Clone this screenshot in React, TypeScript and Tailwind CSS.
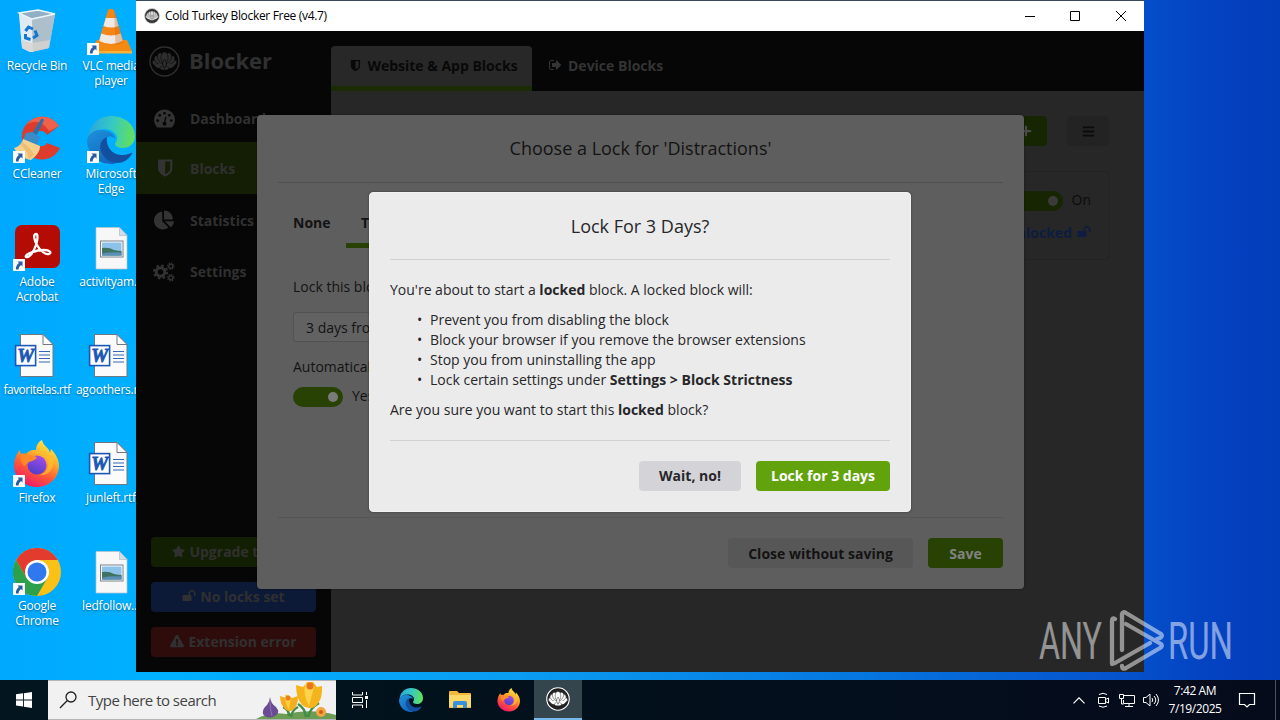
import type { ReactNode } from 'react';
import { FaBars, FaChartPie, FaExclamationTriangle, FaPlus, FaStar } from 'react-icons/fa';

/* ---------- Glyphs ---------- */

function ShieldIcon({ className }: { className: string }) {
  return (
    <svg viewBox="0 0 1664 1792" className={className} fill="currentColor">
      <path d="M1344 960V320H896v1137q119-63 213-137 235-184 235-360zm192-768v768q0 86-33.500 170.500t-83 150-118 127.500-126.500 103-121 77.500-89.500 49.500-42.500 20q-12 6-26 6t-26-6q-16-7-42.500-20t-89.500-49.500-121-77.500-126.500-103-118-127.500-83-150T256 960V192q0-26 19-45t45-19h1152q26 0 45 19t19 45z" />
    </svg>
  );
}

function UnlockIcon({ className }: { className: string }) {
  return (
    <svg viewBox="0 0 1792 1792" className={className} fill="currentColor">
      <path d="M1728 576v256q0 26-19 45t-45 19h-64q-26 0-45-19t-19-45V576q0-106-75-181t-181-75-181 75-75 181v192h96q40 0 68 28t28 68v576q0 40-28 68t-68 28H160q-40 0-68-28t-28-68V864q0-40 28-68t68-28h672V576q0-185 131.500-316.500T1280 128t316.500 131.500T1728 576z" />
    </svg>
  );
}

function SignOutIcon({ className }: { className: string }) {
  return (
    <svg viewBox="0 128 1664 1536" className={className} fill="currentColor">
      <path d="M640 1440q0 4 1 20t.5 26.500-3 23.500-10 19.500-20.500 6.500h-320q-119 0-203.500-84.500T0 1248V544q0-119 84.500-203.500T288 256h320q13 0 22.500 9.500T640 288q0 4 1 20t.5 26.500-3 23.500-10 19.500T608 384H288q-66 0-113 47t-47 113v704q0 66 47 113t113 47h312l11.500 1 11.500 3 8 5.500 7 9 2 13.500z" />
      <path d="M1568 896q0 26-19 45l-544 544q-19 19-45 19t-45-19-19-45v-288H448q-26 0-45-19t-19-45V704q0-26 19-45t45-19h448V352q0-26 19-45t45-19 45 19l544 544q19 19 19 45z" />
    </svg>
  );
}

function DialIcon({ className }: { className: string }) {
  return (
    <svg viewBox="0 0 20 18" className={className}>
      <path d="M3 17.500a10 10 0 1 1 14 0z" fill="currentColor" />
      <g fill="#060606">
        <circle cx="3.500" cy="11" r="1.300" />
        <circle cx="5.500" cy="6" r="1.300" />
        <circle cx="10" cy="4" r="1.300" />
        <circle cx="14.500" cy="6" r="1.300" />
        <circle cx="16.500" cy="11" r="1.300" />
      </g>
      <path d="M10 13.500l1.300-6" stroke="#060606" strokeWidth="1.300" />
      <circle cx="10" cy="14" r="1.900" fill="#060606" />
    </svg>
  );
}

function GearsIcon({ className }: { className: string }) {
  return (
    <svg viewBox="0 0 22 20" className={className} fill="none" stroke="currentColor">
      <circle cx="7.500" cy="10" r="4.300" strokeWidth="3" />
      <circle cx="7.500" cy="10" r="6.500" strokeWidth="2" strokeDasharray="2.550 2.550" />
      <circle cx="17.800" cy="4.200" r="2" strokeWidth="1.400" />
      <circle cx="17.800" cy="4.200" r="3.200" strokeWidth="1.300" strokeDasharray="1.250 1.260" />
      <circle cx="17.800" cy="15.800" r="2" strokeWidth="1.400" />
      <circle cx="17.800" cy="15.800" r="3.200" strokeWidth="1.300" strokeDasharray="1.250 1.260" />
    </svg>
  );
}

/* ---------- Logos ---------- */

function TurkeyLogo({ className, dark, light }: { className: string; dark: string; light: string }) {
  const feathers = [-78, 78, -52, 52, -26, 26, 0];
  return (
    <svg viewBox="0 0 32 32" className={className}>
      <circle cx="16" cy="16" r="15" fill={dark} stroke={light} strokeWidth="1.500" />
      {feathers.map((a) => (
        <ellipse
          key={a}
          cx="16"
          cy="12"
          rx="3.700"
          ry="6"
          fill={light}
          stroke={dark}
          strokeWidth="0.600"
          transform={`rotate(${a} 16 19)`}
        />
      ))}
      <path d="M5.500 18.500q3 1 5 0h11q2 1 5 0-1 4.500-6 4.500l-1.500 1.500h-6L11.500 23q-5 0-6-4.500z" fill={light} />
      <path d="M16 13.500c-1.600 2-2.200 4-1.600 6.500l1.600 3 1.600-3c.6-2.500 0-4.500-1.600-6.500z" fill={light} stroke={dark} strokeWidth="0.700" />
      <path d="M11 22.500l3-2M21 22.500l-3-2" stroke={dark} strokeWidth="0.600" />
    </svg>
  );
}

function EdgeLogo({ className, id }: { className: string; id: string }) {
  return (
    <svg viewBox="0 0 48 48" className={className}>
      <defs>
        <linearGradient id={`${id}a`} x1="0" y1="0.3" x2="1" y2="0.4">
          <stop offset="0" stopColor="#2aa5df" />
          <stop offset="0.5" stopColor="#35c9c4" />
          <stop offset="1" stopColor="#63e05a" />
        </linearGradient>
        <linearGradient id={`${id}b`} x1="0" y1="0" x2="0.5" y2="1">
          <stop offset="0" stopColor="#1e93dc" />
          <stop offset="1" stopColor="#1268bd" />
        </linearGradient>
      </defs>
      <path d="M1 22C2 9 12 0 24 0c14 0 24 9 24 20 0 8-6 12-12 12-5 0-8-2-8-4s2-2 2-6c0-5-6-9-13-9C9 13 3 17 1 22z" fill={`url(#${id}a)`} />
      <path d="M0 24c2-7 7-10 14-10 8 0 14 4 14 9-1-2-4-3-7-2-6 2-8 8-5 14 3 7 9 10 13 12-2 1-3 1-5 1C11 48 0 37 0 24z" fill={`url(#${id}b)`} />
      <path d="M20 21c-7 3-9 11-4 18 5 8 15 10 22 6 3-2 5-4 7-7 .5-1-.3-1.500-1-1-4 2-10 3-15 1-7-3-10-10-9-17z" fill="#134f9e" />
    </svg>
  );
}

function FirefoxLogo({ className, id }: { className: string; id: string }) {
  return (
    <svg viewBox="0 0 48 48" className={className}>
      <defs>
        <linearGradient id={`${id}a`} x1="0.8" y1="0" x2="0.3" y2="1">
          <stop offset="0" stopColor="#fff14a" />
          <stop offset="0.35" stopColor="#ffb02b" />
          <stop offset="0.65" stopColor="#ff5a36" />
          <stop offset="1" stopColor="#f0146c" />
        </linearGradient>
        <linearGradient id={`${id}b`} x1="0.7" y1="0" x2="0.3" y2="1">
          <stop offset="0" stopColor="#a54bea" />
          <stop offset="1" stopColor="#4a3fc8" />
        </linearGradient>
      </defs>
      <path
        d="M7 10c0 2 .5 3.500 1.500 5 1.500-1 3-1.500 5-1.500C17 9 21 10 23 10c0-4 2-8 6-10 1 5 5 7 7 10l1 3 1-4c5 5 8 11 8 17 0 12-10 21-22 21S1 38 1 26c0-6 2-12 6-16z"
        fill={`url(#${id}a)`}
      />
      <circle cx="24" cy="25" r="9.500" fill={`url(#${id}b)`} />
      <path d="M8 14c3-1 6 0 8 2 3-1 7 0 8 2-2 2-5 3-8 4-2 1-3 3-5 4-3-3-4-8-3-12z" fill="#ff8a27" />
      <path d="M25 14c5-1 10 3 10 10 0 6-4 10-9 11 8 1 14-4 14-12 0-7-7-11-15-9z" fill="#ffbd30" opacity="0.75" />
    </svg>
  );
}

function RecycleBin() {
  return (
    <svg viewBox="0 0 48 48" className="size-12">
      <path d="M6 5l19-3 17 4-6 34-19 4-8-4z" fill="#c7d9e6" opacity="0.95" />
      <path d="M6 5l13 6 1 33-3 0-8-4z" fill="#dfeaf2" />
      <path d="M19 11l23-5-6 34-16 4z" fill="#aebfcc" />
      <path d="M9 32l10 3 18-3-1.500 8-18.500 4-8-4z" fill="#d9d4d1" opacity="0.8" />
      <path d="M6 5l19-3 17 4-23 5z" fill="#92b0c4" stroke="#eef6fb" strokeWidth="1.300" />
      <g fill="none" stroke="#1477cf" strokeWidth="3">
        <path d="M12.500 23l3-4 4.500 2" />
        <path d="M22 22.500l2 5-4 2.500" />
        <path d="M17.500 31.500l-5-1.500 0-4" />
      </g>
    </svg>
  );
}

function VlcLogo() {
  return (
    <svg viewBox="0 0 48 48" className="size-12">
      <path d="M10 32h30l5 11q.5 2-1 2H4q-1.500 0-1-2z" fill="#f58a12" />
      <path d="M3 43h42v2.500H3z" fill="#ffb037" />
      <path d="M21 2q3-2.500 6 0l9.500 32q-12 8-25 0z" fill="#f58616" />
      <path d="M18.800 10h10.400l2.300 8q-7.500 3-15 0zM14.300 25.500q9.500 4 19.300 0l2.200 7.500q-11.500 6-23.500 0z" fill="#eee9e4" />
      <path d="M27 2l9.500 32q-4 3-8 3z" fill="#c95f08" opacity="0.3" />
    </svg>
  );
}

function CCleanerLogo() {
  return (
    <svg viewBox="0 0 48 48" className="size-12">
      <path d="M46 10C41 3 34 0 27 1 16 2 8 11 9 23c1 14 13 23 24 20 6-1 11-5 14-11l-13-5c-3 5-10 4-12-1-2-6 1-11 6-11 3 0 5 2 6 4z" fill="#dd3c2c" />
      <path d="M46 10C41 3 34 0 27 1c-6 .5-11 4-14 8 8-5 16-5 23 6z" fill="#f0614b" />
      <path d="M31 4l-9 19-5-2L28 3q2-1 3 1z" fill="#2f6ea8" />
      <path d="M13 17l6-1 8 5-3 9-14-6z" fill="#3a8cc9" />
      <path d="M10 23l17 7c0 6-4 10-9 14-7-1-14-6-17-12 4-1 8-4 9-9z" fill="#f6d08d" />
      <path d="M7 28c5 5 8 9 9 15l5-4c-2-5-6-9-12-13z" fill="#e9b565" opacity="0.7" />
    </svg>
  );
}

function AcrobatLogo() {
  return (
    <svg viewBox="0 0 48 48" className="size-12">
      <rect x="2" y="1" width="45" height="43" rx="7" fill="#b50b05" />
      <path
        d="M13 33c4 1 8-6 10-12 2-6 2-11 0-11-3 0-2 6 1 11 3 6 9 10 12 9 3-1 1-4-5-4-7 0-20 4-18 7z"
        fill="none"
        stroke="#fff"
        strokeWidth="2.300"
        strokeLinejoin="round"
      />
    </svg>
  );
}

function ChromeLogo() {
  return (
    <svg viewBox="0 0 48 48" className="size-12">
      <circle cx="24" cy="24" r="24" fill="#fbc116" />
      <path d="M24 12h20.800A24 24 0 0 0 3.200 12l10.400 18z" fill="#e33b2e" />
      <path d="M3.200 12l10.400 18L34.400 30 24 48A24 24 0 0 1 3.200 12z" fill="#2da04e" />
      <circle cx="24" cy="24" r="12" fill="#fff" />
      <circle cx="24" cy="24" r="9.500" fill="#2f78ee" />
    </svg>
  );
}

function ImageFile() {
  return (
    <svg viewBox="0 0 48 48" className="size-12">
      <path d="M9 3.500h23.500l7.500 8V45H9z" fill="#f7f7f7" stroke="#b9c3ca" strokeWidth="0.700" />
      <path d="M32.500 3.500v8H40z" fill="#d4dee6" stroke="#a8b4bc" strokeWidth="0.600" />
      <rect x="13.500" y="17" width="22.500" height="16" fill="#fff" stroke="#74828e" strokeWidth="1" />
      <rect x="15" y="18.500" width="19.500" height="13" fill="#8dc2ea" />
      <path d="M15 24q7-1 12 2 4 1 7.500 1v4.500H15z" fill="#3e7361" />
      <path d="M15 29.500q9-2 19.500-1v3H15z" fill="#5a8fb8" />
    </svg>
  );
}

function WordFile() {
  return (
    <svg viewBox="0 0 48 48" className="size-12">
      <path d="M7.500 2.500H30l10 10V44.500H7.500z" fill="#fbfbfb" stroke="#6f7780" strokeWidth="1" />
      <path d="M30 2.500V12.500h10z" fill="#fff" stroke="#6f7780" strokeWidth="1" />
      <path d="M26 19.500h11M26 23h11M26 26.500h11M26 30h11" stroke="#3568b8" strokeWidth="1.200" />
      <rect x="2.600" y="13.600" width="20" height="20" fill="#fff" stroke="#1b57b5" strokeWidth="1.600" />
      <text x="12.600" y="30" textAnchor="middle" fontFamily="Liberation Serif" fontWeight="700" fontStyle="italic" fontSize="19" fill="#1b57b5" stroke="#1b57b5" strokeWidth="0.8">
        W
      </text>
    </svg>
  );
}

function ShortcutArrow() {
  return (
    <svg viewBox="0 0 12 12" className="absolute bottom-px left-0 size-3">
      <rect width="12" height="12" fill="#f8fafc" />
      <path d="M4.500 2.500h5v5L8 6Q5.500 7.500 5.500 10.500H3Q2.500 6.500 6 4z" fill="#2a5ca0" />
    </svg>
  );
}

/* ---------- Desktop ---------- */

type Shortcut = { label: string[]; icon: ReactNode; arrow?: boolean };

const shortcuts: Shortcut[] = [
  { label: ['Recycle Bin'], icon: <RecycleBin /> },
  { label: ['VLC media', 'player'], icon: <VlcLogo />, arrow: true },
  { label: ['CCleaner'], icon: <CCleanerLogo />, arrow: true },
  { label: ['Microsoft', 'Edge'], icon: <EdgeLogo id="edgeDesk" className="size-12" />, arrow: true },
  { label: ['Adobe', 'Acrobat'], icon: <AcrobatLogo />, arrow: true },
  { label: ['activityam...'], icon: <ImageFile /> },
  { label: ['favoritelas.rtf'], icon: <WordFile /> },
  { label: ['agoothers.rtf'], icon: <WordFile /> },
  { label: ['Firefox'], icon: <FirefoxLogo id="ffDesk" className="size-12" />, arrow: true },
  { label: ['junleft.rtf'], icon: <WordFile /> },
  { label: ['Google', 'Chrome'], icon: <ChromeLogo />, arrow: true },
  { label: ['ledfollow...'], icon: <ImageFile /> },
];

function DesktopIcon({ label, icon, arrow }: Shortcut) {
  return (
    <div className="flex h-[108px] w-[74px] flex-col items-center pt-2">
      <div className="relative size-12">
        {icon}
        {arrow && <ShortcutArrow />}
      </div>
      <div className="mt-0.5 text-center text-[12px] leading-[15px] tracking-[-0.22px] whitespace-nowrap text-white [text-shadow:0_1px_2px_rgba(0,0,0,0.45)]">
        {label.map((l) => (
          <div key={l} className={l.length > 13 ? 'tracking-[-0.5px]' : undefined}>{l}</div>
        ))}
      </div>
    </div>
  );
}

/* ---------- Application window ---------- */

function TitleBar() {
  return (
    <div className="flex h-[30px] shrink-0 items-center bg-white pl-2 text-black">
      <TurkeyLogo className="size-4" dark="#333" light="#d9d9d9" />
      <span className="ml-[5px] text-[12px] tracking-[-0.32px] whitespace-nowrap">Cold Turkey Blocker Free (v4.7)</span>
      <div className="ml-auto flex">
        <span className="flex w-[46px] items-center justify-center">
          <svg viewBox="0 0 10 10" className="size-2.5"><path d="M0 5.500h10" stroke="#000" /></svg>
        </span>
        <span className="flex w-[44px] items-center justify-center">
          <svg viewBox="0 0 10 10" className="size-2.5"><path d="M.5.5h9v9h-9z" fill="none" stroke="#000" /></svg>
        </span>
        <span className="flex w-[47px] items-center justify-center">
          <svg viewBox="0 0 10 10" className="size-2.5"><path d="M0 0l10 10M10 0L0 10" stroke="#000" /></svg>
        </span>
      </div>
    </div>
  );
}

function Sidebar() {
  const items = [
    { name: 'Dashboard', icon: <DialIcon className="h-[19px] w-[21px]" />, row: 'h-[51px] pt-1' },
    { name: 'Blocks', icon: <ShieldIcon className="h-5 w-[19px]" />, row: 'h-[52px] bg-[#141e04]' },
    { name: 'Statistics', icon: <FaChartPie className="size-5" />, row: 'h-[52px]' },
    { name: 'Settings', icon: <GearsIcon className="h-5 w-[22px]" />, row: 'h-[51px]' },
  ];
  return (
    <div className="flex w-[195px] shrink-0 flex-col bg-[#060606] font-bold text-[#303030]">
      <div className="flex h-[60px] items-center pl-[13px]">
        <TurkeyLogo className="size-[31px]" dark="#060606" light="#2e2e2e" />
        <span className="ml-[9px] pb-[3px] text-[22px] leading-none">Blocker</span>
      </div>
      {items.map((it) => (
        <div key={it.name} className={`flex items-center ${it.row}`}>
          <span className="ml-[14px] flex w-7 justify-center text-[#333]">{it.icon}</span>
          <span className="ml-3 text-[14px]">{it.name}</span>
        </div>
      ))}
      <div className="mt-auto flex flex-col gap-[15px] p-[15px] text-[14px]">
        <div className="flex h-[30px] items-center justify-center gap-1 rounded-[4px] bg-[#131f03] pb-0.5">
          <FaStar className="size-[13px]" /> Upgrade to Pro
        </div>
        <div className="flex h-[30px] items-center justify-center gap-1 rounded-[4px] bg-[#0c1937] pb-0.5">
          <UnlockIcon className="size-[14px]" /> No locks set
        </div>
        <div className="flex h-[30px] items-center justify-center gap-1 rounded-[4px] bg-[#2f0c0c] pb-0.5">
          <FaExclamationTriangle className="size-[14px]" /> Extension error
        </div>
      </div>
    </div>
  );
}

function MainPane() {
  return (
    <div className="flex flex-1 flex-col">
      <div className="flex h-[60px] items-end bg-[#060606] text-[14px] font-bold">
        <div className="flex h-[45px] w-[201px] items-center justify-center gap-1.5 rounded-t-[4px] border-b-[5px] border-[#1b2b04] bg-[#282828] pb-0.5 pl-1 text-[#080808]">
          <ShieldIcon className="h-[13px] w-3" /> Website &amp; App Blocks
        </div>
        <div className="flex h-[45px] items-center gap-1.5 border-b-[5px] border-transparent pb-0.5 pl-[17px] text-[#343434]">
          <SignOutIcon className="h-3 w-[13px]" /> Device Blocks
        </div>
      </div>
      <div className="flex flex-1 flex-col items-end bg-[#272727] pt-[25px] pr-[35px] text-[14px] text-[#0b0b0b]">
        <div className="flex gap-5">
          <div className="flex h-[30px] w-[42px] items-center justify-center rounded-[4px] bg-[#162603] text-[#4a4a4a]">
            <FaPlus className="size-3" />
          </div>
          <div className="flex h-[30px] w-[42px] items-center justify-center rounded-[4px] bg-[#232324]">
            <FaBars className="size-[13px]" />
          </div>
        </div>
        <div className="mt-[25px] flex h-[89px] w-[743px] flex-col items-end rounded-[3px] border border-[#232323] pt-[18px] pr-[17px]">
          <div className="flex h-[22px] items-center">
            <div className="flex h-5 w-[50px] items-center justify-end rounded-full bg-[#172503] pr-[5px]">
              <span className="size-[10px] rounded-full bg-[#3b3b3b]" />
            </div>
            <span className="mb-0.5 ml-[9px] leading-5">On</span>
          </div>
          <div className="mt-[10px] flex h-5 items-center gap-[5px] font-bold text-[#0d1c40]">
            Unlocked <UnlockIcon className="size-[14px]" />
          </div>
        </div>
      </div>
    </div>
  );
}

function LockChooser() {
  return (
    <div className="absolute top-[114px] left-[121px] flex h-[474px] w-[767px] flex-col rounded-[4px] bg-[#5e5e5e] px-[21px] text-[14px] text-[#131313] shadow-[0_0_2px_rgba(0,0,0,0.5)]">
      <div className="flex h-[68px] items-center justify-center border-b border-[#505050] text-[18px]">Choose a Lock for 'Distractions'</div>
      <div className="flex flex-1 flex-col items-start px-[15px]">
        <div className="mt-[17px] flex h-[48px] font-bold">
          <div className="flex w-[53px] items-center pb-[3px]">None</div>
          <div className="flex w-[70px] items-center border-b-[5px] border-[#274203] pt-[2px] pl-[15px]">Timer</div>
        </div>
        <div className="mt-[29px] w-20 overflow-hidden leading-5 whitespace-nowrap">Lock this block</div>
        <div className="mt-[15px] flex h-[30px] w-[300px] items-center rounded-[3px] border border-[#525252] bg-[#626262] pl-3">3 days from now</div>
        <div className="mt-[15px] leading-5">Automatically</div>
        <div className="mt-[10px] flex items-center">
          <div className="flex h-5 w-[50px] items-center justify-end rounded-full bg-[#274203] pr-[5px]">
            <span className="size-[10px] rounded-full bg-[#7a7a7a]" />
          </div>
          <span className="-mt-0.5 ml-[9px] leading-5">Yes</span>
        </div>
      </div>
      <div className="flex h-[72px] items-start justify-end gap-[15px] border-t border-[#555] pt-5 font-bold">
        <div className="flex h-[30px] w-[185px] items-center justify-center rounded-[4px] bg-[#575758]">Close without saving</div>
        <div className="flex h-[30px] w-[75px] items-center justify-center rounded-[4px] bg-[#274203] text-[#828282]">Save</div>
      </div>
    </div>
  );
}

function ConfirmDialog() {
  const effects: ReactNode[] = [
    'Prevent you from disabling the block',
    'Block your browser if you remove the browser extensions',
    'Stop you from uninstalling the app',
    <>Lock certain settings under <b>Settings &gt; Block Strictness</b></>,
  ];
  return (
    <div className="absolute top-[191px] left-[233px] flex h-[320px] w-[542px] flex-col rounded-[4px] border border-[#f2f2f2] bg-[#ebebeb] px-5 text-[14px] leading-5 text-[#27272a] shadow-[0_0_2px_rgba(0,0,0,0.5)]">
      <div className="flex h-[67px] items-center justify-center border-b border-[#d0d0d0] text-[18px]">Lock For 3 Days?</div>
      <p className="mt-5">You're about to start a <b>locked</b> block. A locked block will:</p>
      <ul className="mt-2.5">
        {effects.map((e, i) => (
          <li key={i} className="flex">
            <span className="w-10 pl-[27px]">•</span>
            <span>{e}</span>
          </li>
        ))}
      </ul>
      <p className="mt-2.5">Are you sure you want to start this <b>locked</b> block?</p>
      <div className="mt-5 flex justify-end gap-[15px] border-t border-[#d0d0d0] pt-5 font-bold">
        <div className="flex h-[30px] w-[102px] items-center justify-center rounded-[4px] bg-[#d4d4d8]">Wait, no!</div>
        <div className="flex h-[30px] w-[134px] items-center justify-center rounded-[4px] bg-[#62a30d] text-white">Lock for 3 days</div>
      </div>
    </div>
  );
}

function Watermark() {
  return (
    <svg viewBox="0 0 210 70" className="absolute top-[605px] left-[1035px] h-[70px] w-[210px] opacity-50">
      <g fill="#fff" fontFamily="Roboto" fontSize="51">
        <text x="4" y="54" textLength="63" lengthAdjust="spacingAndGlyphs">ANY</text>
        <text x="133" y="54" textLength="65" lengthAdjust="spacingAndGlyphs">RUN</text>
      </g>
      <g fill="none" stroke="#fff" strokeWidth="4.300" strokeLinejoin="round" strokeLinecap="round">
        <path d="M80 14q-3-2-3 2v43l3-1 35-20" />
        <path d="M87 45V9q1-3 4-1l35 21q2 2-1 4l-3 1" />
        <path d="M91 19l35 20q2 2-1 4L91 63q-4 2-4-2" />
      </g>
    </svg>
  );
}

/* ---------- Taskbar ---------- */

function Flowers() {
  return (
    <svg viewBox="0 0 80 39" className="h-[39px] w-20">
      <path d="M0 39q14-8 30-5 25-6 50 1v4z" fill="#6d9c54" />
      <path d="M14 17q1 7 6 10 5 6-1 9-8 4-12-2-1-5 4-9 3-4 3-8z" fill="#6a4b94" />
      <path d="M14 20q0 9 2 16" stroke="#8f73b5" fill="none" />
      <path d="M33 36q0-7-6-9M35 37q1-7 7-10M50 37q-1-9-8-13M52 37q2-9 11-14" stroke="#3f8d46" strokeWidth="2.500" fill="none" />
      <path d="M24 16l6 2 2-3 4 3 6-2q0 10-5 14-5 3-9-2-4-5-4-12z" fill="#f4ae1d" />
      <path d="M29 15q4-1 6 3l-2 12q-4-6-4-15z" fill="#fccc42" />
      <path d="M40 5l7 2 4-5 6 0 4 5 5-1q1 13-6 20-7 5-14-1-6-7-6-20z" fill="#f6b41c" />
      <path d="M49 4q6-3 9 3l-5 19q-6-11-4-22z" fill="#ffd34a" />
      <circle cx="54" cy="6" r="3.500" fill="#e8741e" />
      <circle cx="32" cy="18" r="2.500" fill="#e8801e" />
      <circle cx="65" cy="32" r="5" fill="#f3a641" />
      <circle cx="65" cy="32" r="2" fill="#d2601a" />
    </svg>
  );
}

function Taskbar() {
  return (
    <div className="flex h-10 shrink-0 items-stretch bg-linear-to-r from-[#03161f] via-[#02101c] to-[#060b1c] text-white">
      <div className="flex w-12 items-center justify-center">
        <svg viewBox="0 0 16 16" className="size-4">
          <path d="M0 2.300l7-1v6.200H0zM7.900 1.200L16 0v7.500H7.900zM0 8.400h7v6.200l-7-1zM7.900 8.400H16V16l-8.100-1.200z" fill="#fff" />
        </svg>
      </div>
      <div className="flex w-72 items-center border-t border-b border-[#b5b5b5] bg-[#f1f1f1]">
        <svg viewBox="0 0 18 18" className="ml-[11px] size-[18px]">
          <path d="M12 1a5 5 0 1 1 0 10 5 5 0 0 1 0-10zM8.300 9.500L1 17" fill="none" stroke="#222" strokeWidth="1.300" />
        </svg>
        <span className="ml-[11px] text-[15px] tracking-[-0.52px] whitespace-nowrap text-[#444]">Type here to search</span>
        <span className="ml-auto self-end"><Flowers /></span>
      </div>
      <div className="flex w-12 items-center justify-center">
        <svg viewBox="0 0 18 18" className="size-[18px]" fill="none" stroke="#fff">
          <path d="M1.500 1v3h10V1M1.500 17v-3h10v3M1.500 6.500h10v5h-10zM15.500 1v3M15.500 9v8" />
          <path d="M14 5h3v3h-3z" fill="#fff" stroke="none" />
        </svg>
      </div>
      <div className="flex w-[53px] items-center justify-center"><EdgeLogo id="edgeBar" className="size-6" /></div>
      <div className="flex w-[46px] items-center justify-center">
        <svg viewBox="0 0 24 24" className="size-6">
          <path d="M1 4q0-1 1-1h7l2 2h11q1 0 1 1v14H1z" fill="#f3b93b" />
          <path d="M1 7h22v11q0 1-1 1H2q-1 0-1-1z" fill="#fbd968" />
          <path d="M5 20v-5q0-2 2-2h10q2 0 2 2v5h-4v-3H9v3z" fill="#3a8fdc" />
        </svg>
      </div>
      <div className="flex w-[51px] items-center justify-center"><FirefoxLogo id="ffBar" className="size-6" /></div>
      <div className="flex w-12 items-center justify-center border-b-2 border-[#76b9ed] bg-[#35454e]">
        <TurkeyLogo className="size-6" dark="#222" light="#fff" />
      </div>
      <div className="ml-auto flex items-center">
        <svg viewBox="0 0 12 7" className="h-[7px] w-3"><path d="M.5 6.300L6 .8l5.500 5.500" fill="none" stroke="#fff" strokeWidth="1.200" /></svg>
        <svg viewBox="0 0 16 16" className="ml-[10px] size-4" fill="none" stroke="#fff">
          <path d="M3.500 5.500h7v6h-7zM10.500 7.500l3-1.500v5l-3-1.500M4 2.500q4-2.500 8 0M4 14q4 2.500 8 0" />
        </svg>
        <svg viewBox="0 0 18 16" className="ml-[7px] h-4 w-[18px]" fill="none" stroke="#fff">
          <path d="M6 3.500h10.500v8H5.500V8M11 11.500v3M7 14.500h8M1.500 2.500h4v4h-4zM3.500 6.500v5.500h2" />
        </svg>
        <svg viewBox="0 0 18 16" className="ml-[6px] h-4 w-[18px]" fill="none" stroke="#fff">
          <path d="M1.500 5.500h2.500l4-3.500v12l-4-3.500H1.500zM10 6q1.500 2 0 4M12 4q3.500 4 0 8M14 2q5 6 0 12" />
        </svg>
        <div className="ml-[5px] w-[60px] text-center text-[12px] leading-[18px] tracking-[-0.42px] whitespace-nowrap">
          <div>7:42 AM</div>
          <div>7/19/2025</div>
        </div>
        <svg viewBox="0 0 18 18" className="ml-[13px] size-[18px]" fill="none" stroke="#fff" strokeWidth="1.200">
          <path d="M1.500 2.500h15v11h-5L9 16l-2.500-2.500h-5z" />
        </svg>
        <div className="mr-1 ml-[19px] h-10 w-px bg-[#4a5060]" />
      </div>
    </div>
  );
}

export default function App() {
  return (
    <div className="flex h-[720px] w-[1280px] flex-col overflow-hidden font-['Open_Sans',sans-serif]">
      <div className="relative flex-1 overflow-hidden bg-[linear-gradient(90deg,#00a8fe_0%,#00b1ff_12%,#0a9df2_40%,#0575df_68%,#054fcb_89%,#0443c2_94%,#033dba_100%)]">
        <div className="grid w-[148px] grid-cols-2">
          {shortcuts.map((s) => (
            <DesktopIcon key={s.label[0]} {...s} />
          ))}
        </div>
        <div className="absolute top-0 left-[136px] flex h-[672px] w-[1008px] flex-col border-t border-[#3b4a5c]">
          <TitleBar />
          <div className="flex flex-1">
            <Sidebar />
            <MainPane />
          </div>
          <LockChooser />
          <ConfirmDialog />
        </div>
        <Watermark />
      </div>
      <Taskbar />
    </div>
  );
}
